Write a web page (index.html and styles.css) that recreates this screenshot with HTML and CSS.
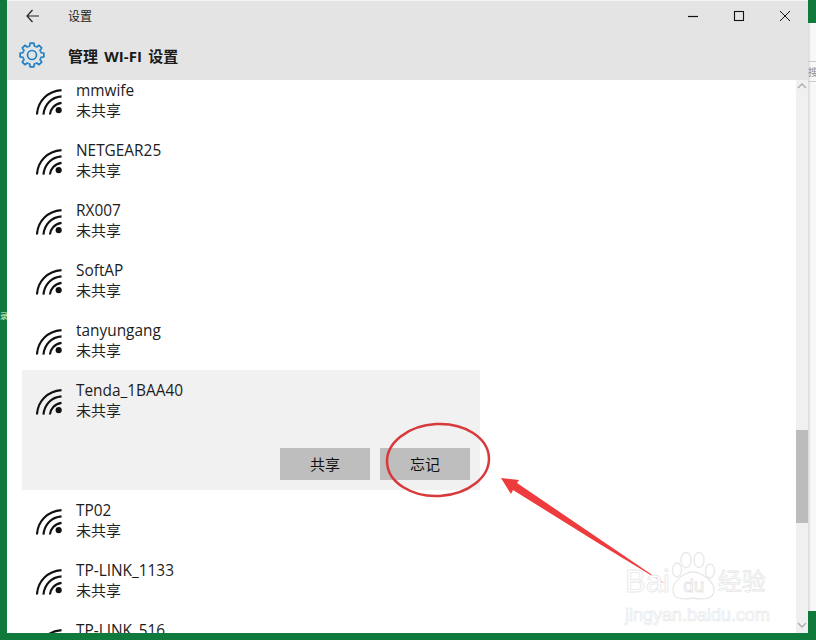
FILE: index.html
```html
<!DOCTYPE html>
<html lang="zh-CN">
<head>
<meta charset="utf-8">
<title>设置</title>
<link rel="stylesheet" href="styles.css">
</head>
<body>
<div class="desktop">
  <svg width="0" height="0" class="defs">
    <symbol id="wifi" viewBox="0 0 28 28">
      <g fill="none" stroke="#111" stroke-width="2.300">
        <path d="M1 27.500C2 13 12 2.500 27.500 1.200"/>
        <path d="M8 27.500C9 17 16 9 27.500 8"/>
        <path d="M15 27.500C15.500 21.500 20 16 27.500 15"/>
      </g>
      <circle cx="24.400" cy="22.800" r="3.300" fill="#111"/>
    </symbol>
    <path id="tooth" d="M9.480 4.500 10.730 3.880 11.120 1.150H14.880L15.270 3.880 16.520 4.500"/>
  </svg>
  <div class="edge-left"><span class="edge-char">录</span></div>
  <main class="window">
    <header class="head">
      <div class="titlebar">
        <svg class="back" width="13" height="14" viewBox="0 0 13 14"><path d="M6.500 1 1 7 6.500 13M1 7H13" fill="none" stroke="#222" stroke-width="1.200"/></svg>
        <span class="title">设置</span>
        <div class="controls">
          <svg width="12" height="12" viewBox="0 0 12 12"><path d="M1 6.500H11" stroke="#111" stroke-width="1.200"/></svg>
          <svg width="12" height="12" viewBox="0 0 12 12"><rect x="1.500" y="1.500" width="9" height="9" fill="none" stroke="#111" stroke-width="1.100"/></svg>
          <svg width="12" height="12" viewBox="0 0 12 12"><path d="M1 1 11 11M11 1 1 11" stroke="#111" stroke-width="1"/></svg>
        </div>
      </div>
      <div class="pagehead">
        <svg class="gear" width="26" height="26" viewBox="0 0 26 26"><g fill="none" stroke="#1f80c8" stroke-width="1.700" stroke-linejoin="round"><use href="#tooth"/><use href="#tooth" transform="rotate(45 13 13)"/><use href="#tooth" transform="rotate(90 13 13)"/><use href="#tooth" transform="rotate(135 13 13)"/><use href="#tooth" transform="rotate(180 13 13)"/><use href="#tooth" transform="rotate(225 13 13)"/><use href="#tooth" transform="rotate(270 13 13)"/><use href="#tooth" transform="rotate(315 13 13)"/><circle cx="13" cy="13" r="4.500"/></g></svg>
        <h1 class="pagetitle">管理 WI-FI 设置</h1>
      </div>
    </header>
    <div class="body">
      <div class="scroll">
        <ul class="list">
          <li class="net"><svg class="wf"><use href="#wifi"/></svg><div><div class="name">mmwife</div><div class="state">未共享</div></div></li>
          <li class="net"><svg class="wf"><use href="#wifi"/></svg><div><div class="name">NETGEAR25</div><div class="state">未共享</div></div></li>
          <li class="net"><svg class="wf"><use href="#wifi"/></svg><div><div class="name">RX007</div><div class="state">未共享</div></div></li>
          <li class="net"><svg class="wf"><use href="#wifi"/></svg><div><div class="name">SoftAP</div><div class="state">未共享</div></div></li>
          <li class="net"><svg class="wf"><use href="#wifi"/></svg><div><div class="name">tanyungang</div><div class="state">未共享</div></div></li>
          <li class="selected">
            <div class="net"><svg class="wf"><use href="#wifi"/></svg><div><div class="name">Tenda_1BAA40</div><div class="state">未共享</div></div></div>
            <div class="actions"><button class="btn">共享</button><button class="btn">忘记</button></div>
          </li>
          <li class="net"><svg class="wf"><use href="#wifi"/></svg><div><div class="name">TP02</div><div class="state">未共享</div></div></li>
          <li class="net"><svg class="wf"><use href="#wifi"/></svg><div><div class="name">TP-LINK_1133</div><div class="state">未共享</div></div></li>
          <li class="net"><svg class="wf"><use href="#wifi"/></svg><div><div class="name">TP-LINK_516</div><div class="state">未共享</div></div></li>
        </ul>
      </div>
      <div class="scrollbar">
        <svg class="chev" width="10" height="6" viewBox="0 0 10 6"><path d="M1 5 5 1 9 5" fill="none" stroke="#aaa" stroke-width="1.300"/></svg>
        <div class="thumb"></div>
        <svg class="chev" width="10" height="6" viewBox="0 0 10 6"><path d="M1 1 5 5 9 1" fill="none" stroke="#aaa" stroke-width="1.300"/></svg>
      </div>
    </div>
  </main>
  <aside class="edge-right">
    <div class="er-green"></div>
    <div class="er-mid"><span class="er-char">搜</span></div>
    <div class="er-rest"></div>
  </aside>
  <svg class="markup" width="816" height="640" viewBox="0 0 816 640">
    <ellipse cx="438" cy="460" rx="51" ry="36" transform="rotate(-3 438 460)" fill="none" stroke="#d8393b" stroke-width="2.500"/>
    <path d="M667 585 598 538 517 483 519 480 501 478 511 494 513 490 598 543z" fill="#ee3b3d"/>
  </svg>
  <div class="mark">
    <div class="mark-top"><span class="bai">Bai</span><div class="paw"><svg width="46" height="48" viewBox="0 0 46 48"><g fill="#fff" stroke="#e8e8e8" stroke-width="1.300"><ellipse cx="6" cy="18" rx="4.500" ry="7"/><ellipse cx="15" cy="8" rx="5" ry="7.500"/><ellipse cx="28" cy="8" rx="5" ry="7.500"/><ellipse cx="39" cy="19" rx="4.500" ry="7"/><path d="M22 20c8 0 21 9 21 18 0 9-9 10-21 8-12 2-20 1-20-8 0-9 12-18 20-18z"/></g></svg><span class="du">du</span></div><span class="jy">经验</span></div>
    <div class="mark-url">jingyan.baidu.com</div>
  </div>
</div>
</body>
</html>
```
FILE: styles.css
```css
* { box-sizing: border-box; }
html, body { margin: 0; padding: 0; }
body { width: 816px; height: 640px; overflow: hidden; background: #0f7a3c; font-family: "Open Sans", "Noto Sans CJK SC", sans-serif; }
.desktop { position: relative; display: flex; width: 816px; height: 640px; }
.defs { position: absolute; }
.edge-left { width: 7px; display: flex; flex-direction: column; justify-content: center; align-items: center; height: 633px; }
.edge-char { font-size: 8px; color: #dfe; margin-top: -2px; overflow: hidden; width: 7px; }
.window { width: 801px; height: 633px; display: flex; flex-direction: column; background: #fff; overflow: hidden; }
.head { height: 80px; background: #e4e4e4; border-top: 1px solid #f4f4f4; flex: none; }
.titlebar { display: flex; align-items: center; height: 29px; padding-left: 19px; }
.back { flex: none; }
.title { margin-left: 29px; font-size: 12px; color: #222; font-family: "Noto Sans CJK SC", sans-serif; }
.controls { margin-left: auto; display: flex; gap: 34px; padding-right: 17px; }
.pagehead { display: flex; align-items: center; height: 48px; margin-top: 1px; padding-left: 12px; }
.pagetitle { margin: 0 0 0 23px; font-size: 15px; font-weight: 700; word-spacing: 2px; letter-spacing: 0.100px; color: #1a1a1a; font-family: "Open Sans", "Noto Sans CJK SC", sans-serif; }
.body { flex: 1; display: flex; min-height: 0; }
.scroll { flex: 1; min-width: 0; overflow: hidden; padding-left: 15px; }
.list { list-style: none; margin: -10px 0 0; padding: 0; width: 458px; }
.net { display: flex; align-items: center; height: 60px; padding-left: 14px; gap: 14px; }
.wf { width: 26px; height: 26px; flex: none; margin-top: 4px; }
.name { font-size: 15.400px; line-height: 21px; color: #1c1c1c; }
.state { font-size: 15px; line-height: 19px; margin: -1px 0 1px; color: #222; font-family: "Noto Sans CJK SC", sans-serif; }
.selected { height: 120px; background: #f1f1f1; }
.actions { display: flex; justify-content: flex-end; gap: 10px; padding: 18px 10px 0 0; }
.btn { width: 90px; height: 32px; border: 0; border-radius: 0; padding: 0 0 2px; background: #bebebe; color: #111; font-size: 15px; font-family: "Noto Sans CJK SC", sans-serif; }
.scrollbar { width: 12px; flex: none; background: #f0f0f0; display: flex; flex-direction: column; align-items: center; padding-top: 3px; padding-bottom: 5px; }
.thumb { width: 12px; height: 93px; background: #bcbcbc; margin-top: 341px; margin-bottom: auto; }
.edge-right { width: 8px; height: 640px; flex: none; display: flex; flex-direction: column; background: linear-gradient(90deg, #d8d8d8, #f8f8f8 3px); overflow: hidden; }
.er-green { height: 23px; background: #0f7a3c; flex: none; }
.er-mid { height: 588px; flex: none; padding-top: 38px; }
.er-char { display: block; border-top: 1px solid #ccc; border-bottom: 1px solid #ccc; height: 21px; font-size: 10px; line-height: 19px; color: #888; font-family: "Noto Sans CJK SC", sans-serif; }
.er-rest { flex: 1; background: #0f7a3c; }
.markup { position: absolute; left: 0; top: 0; pointer-events: none; }
.mark { position: absolute; left: 625px; top: 552px; width: 150px; color: #fff; pointer-events: none; }
.mark-top { display: flex; align-items: flex-end; height: 48px; }
.bai, .jy { font-size: 31px; line-height: 36px; color: #fff; -webkit-text-stroke: 0.800px #e8e8e8; font-family: "Liberation Sans", "Noto Sans CJK SC", sans-serif; }
.jy { font-size: 24px; margin-left: 1px; }
.paw { position: relative; flex: none; width: 46px; height: 48px; margin-left: 1px; display: flex; align-items: flex-end; justify-content: center; }
.paw svg { position: absolute; left: 0; top: 0; }
.du { position: relative; font-size: 19px; line-height: 28px; color: #fff; -webkit-text-stroke: 0.800px #e4e4e4; font-family: "Liberation Sans", sans-serif; }
.mark-url { font-size: 18px; line-height: 22px; margin-top: 4px; color: #fff; -webkit-text-stroke: 0.700px #e8e8e8; font-family: "Liberation Sans", sans-serif; white-space: nowrap; }
```
